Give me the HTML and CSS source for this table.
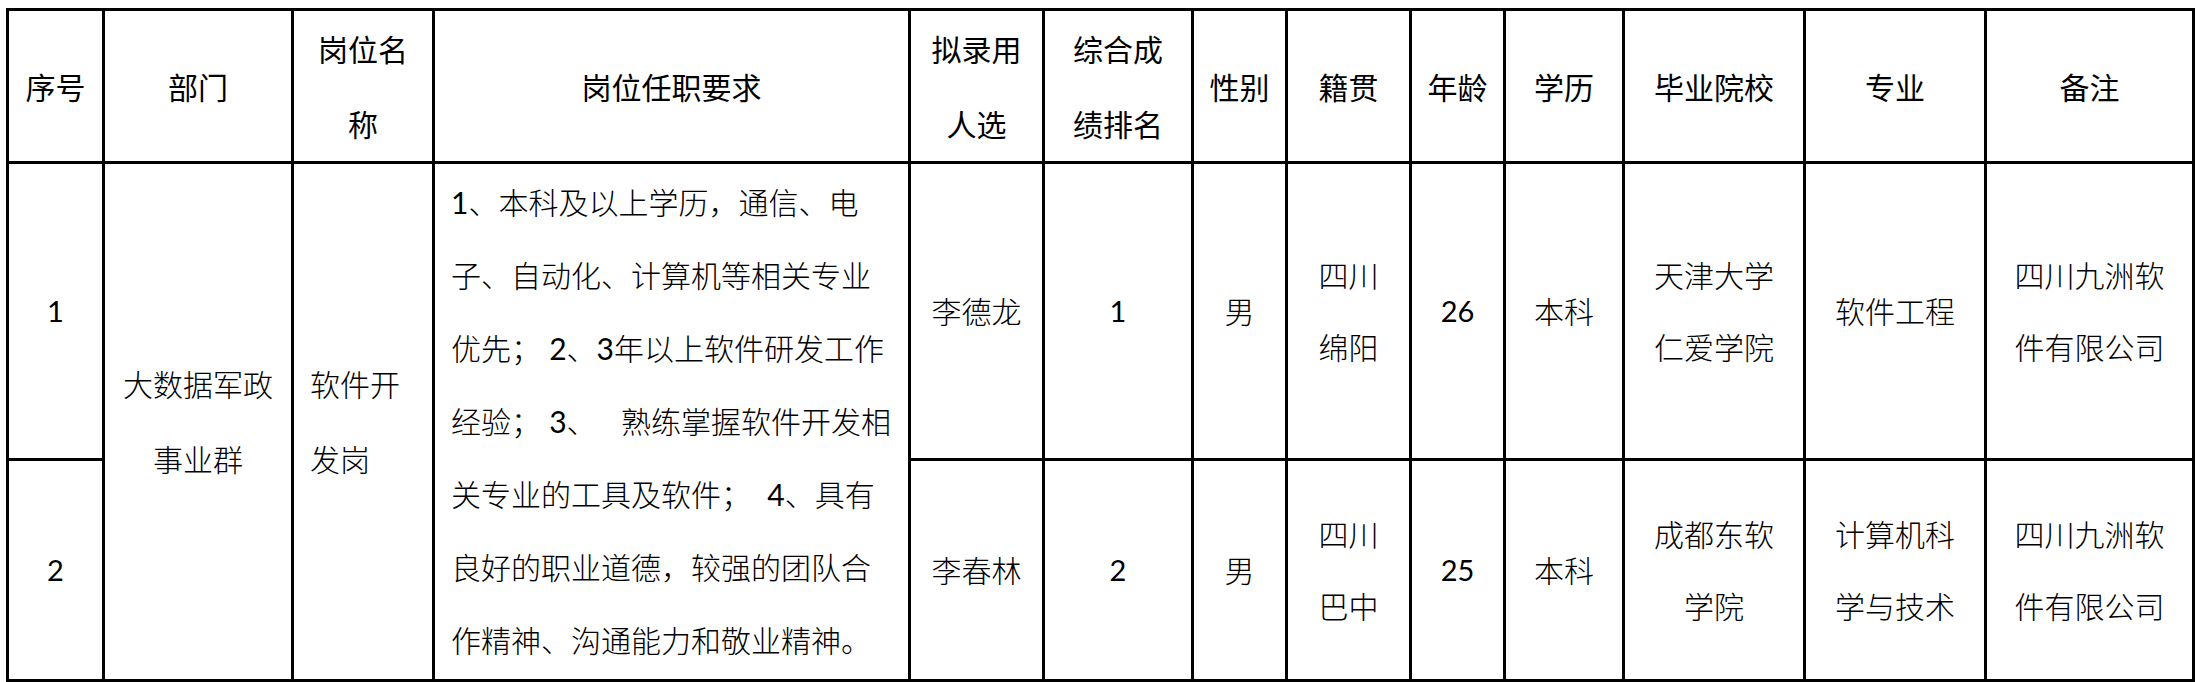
FILE: index.html
```html
<!DOCTYPE html>
<html lang="zh-CN">
<head>
<meta charset="utf-8">
<title>拟录用人员名单</title>
<link rel="stylesheet" href="styles.css">
</head>
<body>
<table class="roster">
  <colgroup>
    <col class="c-no"><col class="c-dept"><col class="c-post"><col class="c-req"><col class="c-name"><col class="c-rank"><col class="c-sex"><col class="c-home"><col class="c-age"><col class="c-edu"><col class="c-school"><col class="c-major"><col class="c-note">
  </colgroup>
  <thead>
    <tr class="r-head">
      <th>序号</th>
      <th>部门</th>
      <th>岗位名<br>称</th>
      <th>岗位任职要求</th>
      <th>拟录用<br>人选</th>
      <th>综合成<br>绩排名</th>
      <th>性别</th>
      <th>籍贯</th>
      <th>年龄</th>
      <th>学历</th>
      <th>毕业院校</th>
      <th>专业</th>
      <th>备注</th>
    </tr>
  </thead>
  <tbody>
    <tr class="r-1">
      <td class="num">1</td>
      <td rowspan="2" class="dept">大数据军政<br>事业群</td>
      <td rowspan="2" class="left">软件开<br>发岗</td>
      <td rowspan="2" class="req">
        <span class="ln"><span class="d">1</span>、本科及以上学历，通信、电</span>
        <span class="ln">子、自动化、计算机等相关专业</span>
        <span class="ln">优先； <span class="d">2</span>、<span class="d">3</span>年以上软件研发工作</span>
        <span class="ln">经验； <span class="d">3</span>、   熟练掌握软件开发相</span>
        <span class="ln">关专业的工具及软件；  <span class="d">4</span>、具有</span>
        <span class="ln">良好的职业道德，较强的团队合</span>
        <span class="ln">作精神、沟通能力和敬业精神。</span>
      </td>
      <td>李德龙</td>
      <td class="num">1</td>
      <td>男</td>
      <td>四川<br>绵阳</td>
      <td class="num">26</td>
      <td>本科</td>
      <td>天津大学<br>仁爱学院</td>
      <td>软件工程</td>
      <td>四川九洲软<br>件有限公司</td>
    </tr>
    <tr class="r-2">
      <td class="num">2</td>
      <td>李春林</td>
      <td class="num">2</td>
      <td>男</td>
      <td>四川<br>巴中</td>
      <td class="num">25</td>
      <td>本科</td>
      <td>成都东软<br>学院</td>
      <td>计算机科<br>学与技术</td>
      <td>四川九洲软<br>件有限公司</td>
    </tr>
  </tbody>
</table>
</body>
</html>
```

FILE: styles.css
```css
html, body {
  margin: 0;
  background: #fff;
}

body {
  padding: 8px 0 0 6px;
  font-family: "Lato", "Noto Sans CJK SC", sans-serif;
  color: #000;
}

.roster {
  border-collapse: collapse;
  table-layout: fixed;
  width: 2189px;
}

.c-no { width: 96px; }
.c-dept { width: 189px; }
.c-post { width: 141px; }
.c-req { width: 476px; }
.c-name { width: 134px; }
.c-rank { width: 149px; }
.c-sex { width: 94px; }
.c-home { width: 124px; }
.c-age { width: 94px; }
.c-edu { width: 119px; }
.c-school { width: 181px; }
.c-major { width: 181px; }
.c-note { width: 208px; }

.r-head { height: 150px; }
.r-1 { height: 297px; }
.r-2 { height: 221px; }

.roster th,
.roster td {
  border: 3px solid #000;
  padding: 0;
  text-align: center;
  vertical-align: middle;
  white-space: nowrap;
  font-size: 30px;
}

.roster th {
  font-family: "Noto Sans CJK SC", sans-serif;
  font-weight: 400;
  line-height: 75px;
}

.roster td {
  font-weight: 300;
  line-height: 72px;
}

.roster td.num {
  font-weight: 400;
  font-size: 29px;
}

.roster td.dept {
  line-height: 75px;
}

.roster td.left {
  text-align: left;
  padding-left: 16px;
  line-height: 75px;
}

.roster td.req {
  text-align: left;
  padding-left: 16px;
  line-height: 73px;
}

.req .ln {
  display: block;
  white-space: pre;
}

.req .d {
  font-weight: 400;
}
```
